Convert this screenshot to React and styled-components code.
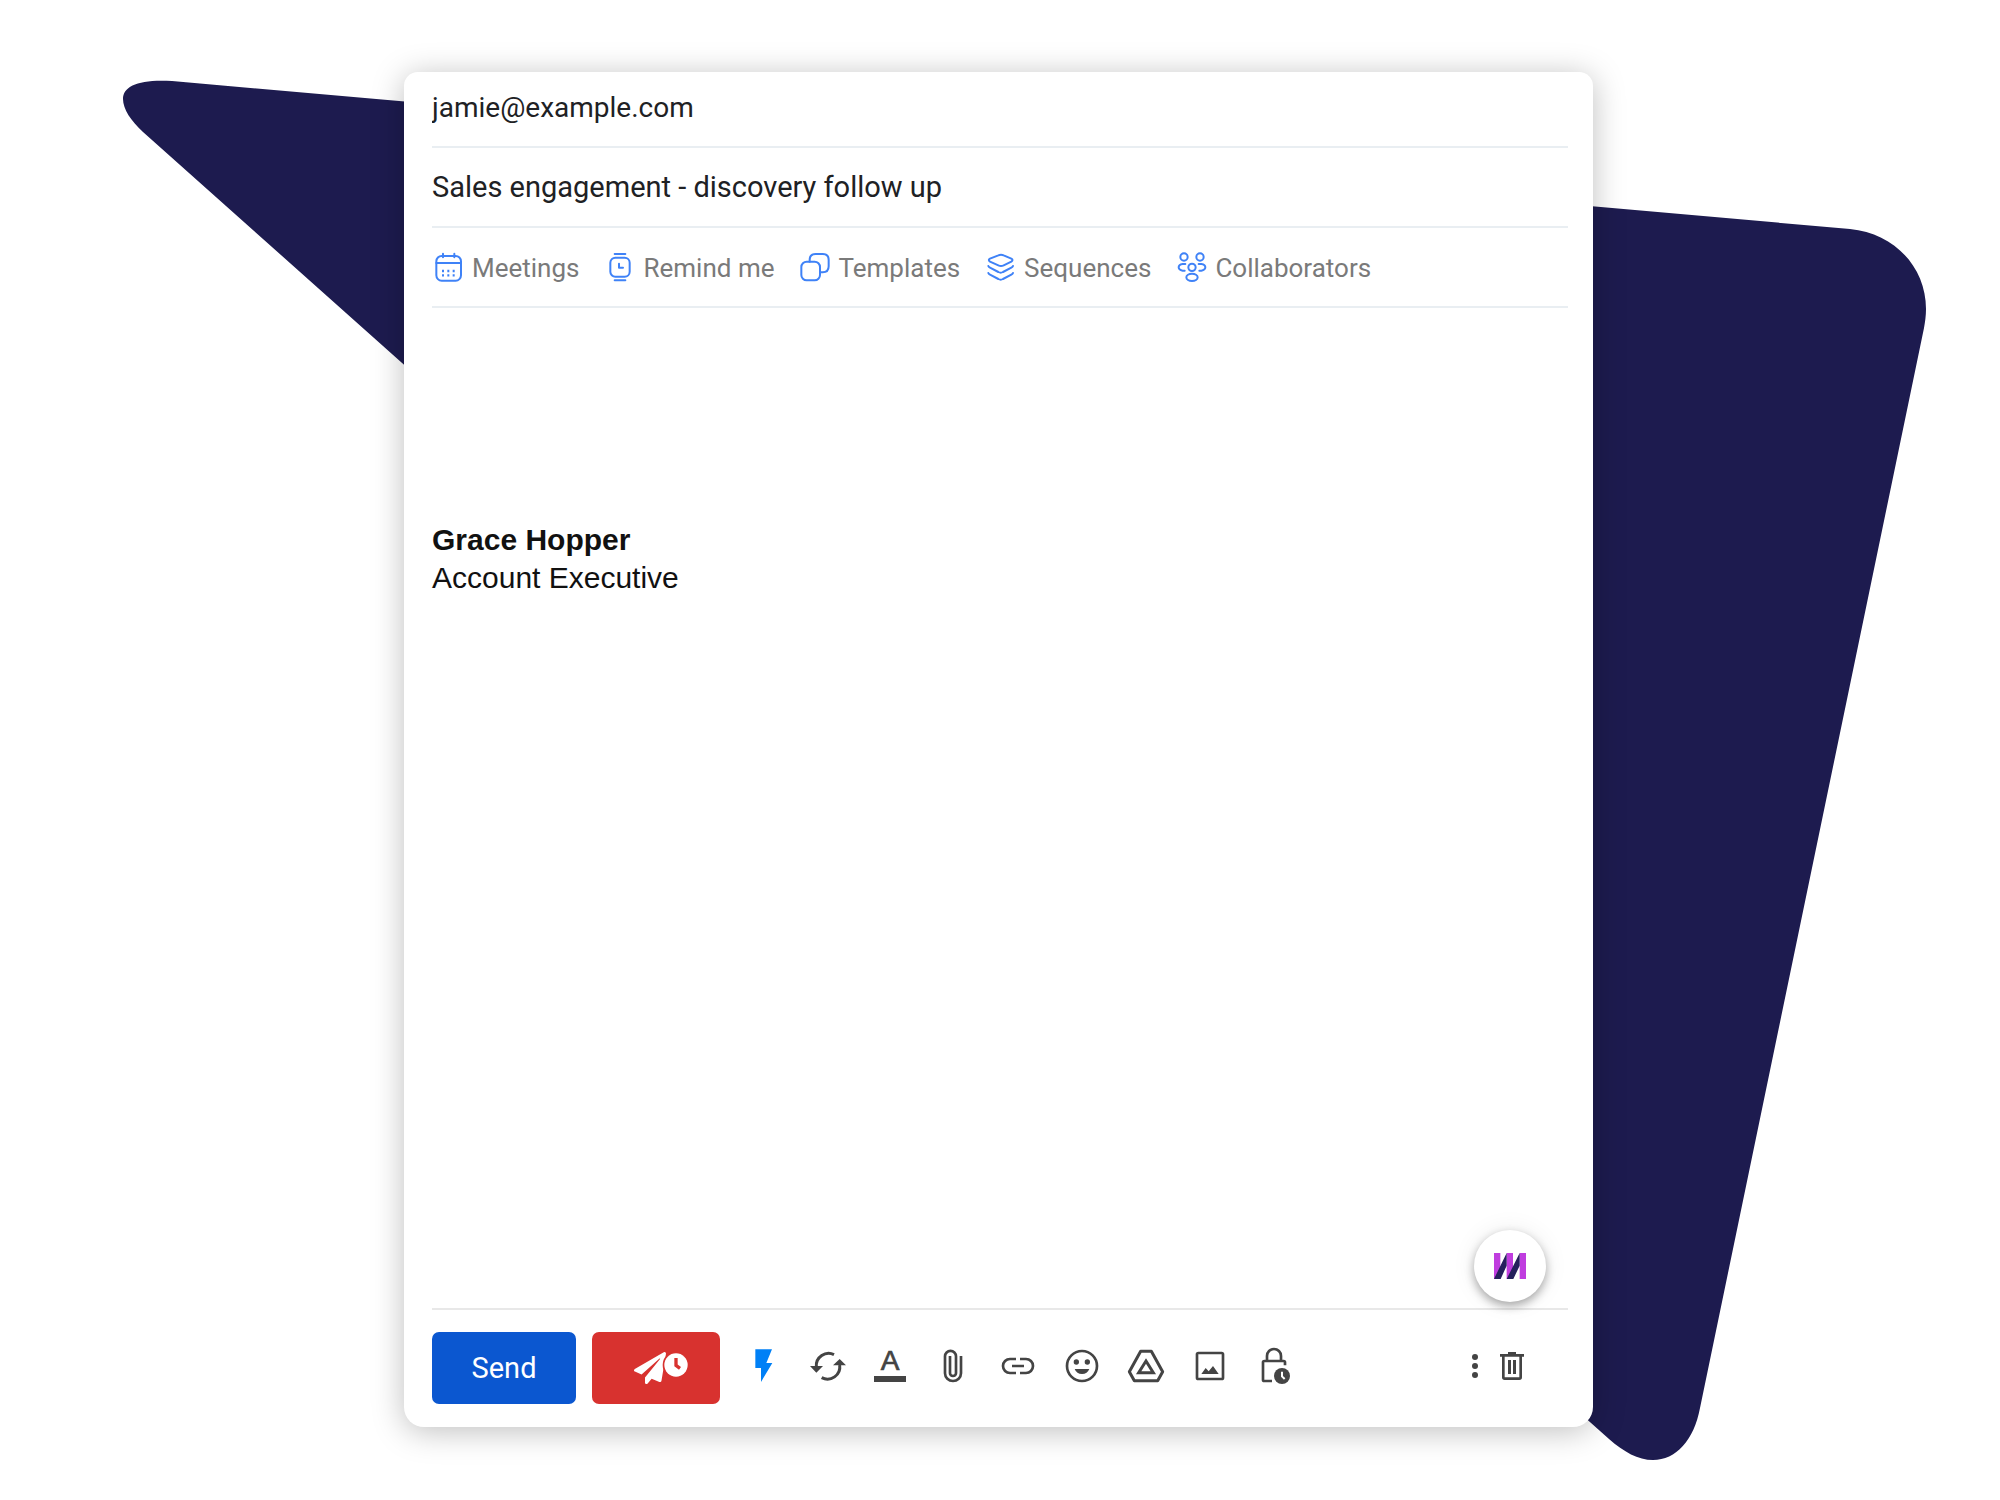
import React, { useState } from "react";
import styled, { createGlobalStyle } from "styled-components";

const GlobalStyle = createGlobalStyle`
  * {
    box-sizing: border-box;
  }

  body {
    margin: 0;
    background: #fff;
    font-family: Roboto, "Liberation Sans", sans-serif;
  }
`;

const shortcuts = [
  {
    label: "Meetings",
    icon: (
      <>
        <rect x="4" y="9" width="74" height="74" rx="16" />
        <path d="M4 30h74M24 2v11M58 2v11" />
        <path
          d="M21 54h6M37 54h6M53 54h6M21 67h6M37 67h6M53 67h6"
          strokeWidth="7"
          strokeLinecap="butt"
        />
      </>
    ),
  },
  {
    label: "Remind me",
    icon: (
      <>
        <rect x="13" y="14" width="58" height="57" rx="15" />
        <path d="M26 3h32M26 82h32M39 32v12h12" />
      </>
    ),
  },
  {
    label: "Templates",
    icon: (
      <>
        <rect x="1" y="26" width="56" height="56" rx="16" />
        <path d="M26 26v-5q0-18 18-18h21q18 0 18 18v19q0 18-18 18h-8" />
      </>
    ),
  },
  {
    label: "Sequences",
    icon: (
      <>
        <path d="M42 5Q38 5 34 7L9 17Q2 21 9 26L34 37Q42 41 50 37L73 26Q80 21 73 17L50 7Q46 5 42 5z" />
        <path d="M4 39q1 3 5 5l25 13q7 4 14 0l25-13q4-2 5-5M4 60q1 3 5 5l25 13q7 4 14 0l25-13q4-2 5-5" />
      </>
    ),
  },
  {
    label: "Collaborators",
    icon: (
      <>
        <circle cx="18" cy="12" r="11" />
        <circle cx="66" cy="12" r="11" />
        <circle cx="42" cy="43" r="11" />
        <ellipse cx="42" cy="73" rx="17" ry="11" />
        <path d="M22 33h-8q-12 2-12 10t12 10h6M62 33h8q12 2 12 10t-12 10h-6" />
      </>
    ),
  },
];

const tools = [
  {
    label: "Quick actions",
    icon: (
      <path d="M40 10H90L73 51H91L57 108V66H40z" fill="#0080f6" stroke="none" />
    ),
  },
  {
    label: "Refresh",
    icon: (
      <>
        <path
          d="M84 26A37 37 0 0 0 31 62M47 95A37 37 0 0 0 101 57"
          fill="none"
          strokeWidth="9"
        />
        <path d="M12 60H51L31 80zM120 58H81L101 39z" stroke="none" />
      </>
    ),
  },
  {
    label: "Text color",
    icon: (
      <>
        <text x="60" y="72" fontSize="84" textAnchor="middle" strokeWidth="2">
          A
        </text>
        <rect x="12" y="90" width="96" height="18" stroke="none" />
      </>
    ),
  },
  {
    label: "Attach file",
    icon: (
      <path
        d="M81 30V82a24 23 0 0 1-48 0V31a16 16 0 0 1 33 0V82a9 8 0 0 1-18 0V30"
        fill="none"
      />
    ),
  },
  {
    label: "Insert link",
    icon: (
      <path
        d="M54 39H36a21 21 0 0 0 0 42H54M66 39H84a21 21 0 0 1 0 42H66M42 60H78"
        fill="none"
      />
    ),
  },
  {
    label: "Insert emoji",
    icon: (
      <>
        <circle cx="60" cy="60" r="45" fill="none" />
        <circle cx="43" cy="48" r="8" stroke="none" />
        <circle cx="76" cy="48" r="8" stroke="none" />
        <path d="M38 69H82Q76 84 60 84Q44 84 38 69z" stroke="none" />
      </>
    ),
  },
  {
    label: "Insert from Drive",
    icon: (
      <>
        <path
          d="M44 16H76L110 77L95 104H25L10 77z"
          fill="none"
          strokeWidth="9"
          strokeLinejoin="round"
        />
        <path d="M60 45L82 80H38z" fill="none" strokeWidth="9" />
      </>
    ),
  },
  {
    label: "Insert photo",
    icon: (
      <>
        <rect x="21" y="21" width="78" height="78" rx="4" fill="none" />
        <path d="M34 84L47 66L56 76L69 60L86 84z" stroke="none" />
      </>
    ),
  },
  {
    label: "Confidential mode",
    icon: (
      <>
        <path
          d="M54 105H31Q27 105 27 101V49Q27 45 31 45H89Q93 45 93 49V58M39 45V30a21 21 0 0 1 42 0V45"
          fill="none"
        />
        <circle cx="84" cy="90" r="24" stroke="none" />
        <path d="M84 77V91L92 99" fill="none" stroke="#fff" strokeWidth="6" />
      </>
    ),
  },
];

function App() {
  const [to, setTo] = useState("jamie@example.com");
  const [subject, setSubject] = useState(
    "Sales engagement - discovery follow up"
  );

  return (
    <>
      <GlobalStyle />
      <S.Page>
        <S.Backdrop
          viewBox="0 0 2000 1500"
          preserveAspectRatio="none"
          aria-hidden="true"
        >
          <path d="M172 81L1850 229C1894 233 1926 267 1926 309C1926 316 1925 322 1924 328L1700 1408C1694 1440 1676 1460 1653 1460C1638 1460 1624 1452 1609 1439L143 132C131 121 123 109 123 99C123 86 139 79 172 81Z" />
        </S.Backdrop>

        <S.Card>
          <S.Recipient
            type="email"
            aria-label="To"
            value={to}
            onChange={(e) => setTo(e.target.value)}
          />
          <S.Subject
            type="text"
            aria-label="Subject"
            value={subject}
            onChange={(e) => setSubject(e.target.value)}
          />

          <S.Shortcuts>
            {shortcuts.map(({ label, icon }) => (
              <S.Shortcut key={label} type="button">
                <S.ShortcutIcon viewBox="-3 -3 90 90" aria-hidden="true">
                  {icon}
                </S.ShortcutIcon>
                <S.ShortcutLabel>{label}</S.ShortcutLabel>
              </S.Shortcut>
            ))}
          </S.Shortcuts>

          <S.Body>
            <S.SenderName>Grace Hopper</S.SenderName>
            <S.SenderTitle>Account Executive</S.SenderTitle>
            <S.Fab type="button" aria-label="Assistant">
              <svg width="32" height="26" viewBox="0 0 96 78">
                <path
                  d="M0 0H19V78H0zM38 0H57V78H38zM77 0H96V78H77z"
                  fill="#c03ddf"
                />
                <path
                  d="M38 0V38L20 78H0zM77 0V38L58 78H38z"
                  fill="#25205c"
                />
              </svg>
            </S.Fab>
          </S.Body>

          <S.Footer>
            <S.Send type="button">Send</S.Send>
            <S.SendLater type="button" aria-label="Send later">
              <svg width="56" height="36" viewBox="0 0 168 108">
                <path
                  transform="translate(3 6) scale(0.1875)"
                  d="M476 3.2L12.5 270.6c-18.1 10.4-15.8 35.6 2.2 43.2L121 358.4l287.3-253.2c5.5-4.9 13.3 2.6 8.6 8.3L176 407v80.5c0 23.6 28.5 32.9 42.5 15.8L282 426l124.6 52.2c14.2 6 30.4-2.9 33-18.2l72-432C515 7.8 493.3-6.8 476 3.2z"
                  fill="#fff"
                />
                <circle cx="129" cy="45" r="40" fill="#d8322f" />
                <circle cx="129" cy="45" r="35" fill="#fff" />
                <path
                  d="M129 24V46L141 55"
                  fill="none"
                  stroke="#d8322f"
                  strokeWidth="10"
                />
              </svg>
            </S.SendLater>

            <S.Tools>
              {tools.map(({ label, icon }) => (
                <S.Tool key={label} type="button" aria-label={label}>
                  <S.ToolIcon viewBox="0 0 120 120">{icon}</S.ToolIcon>
                </S.Tool>
              ))}
            </S.Tools>

            <S.More type="button" aria-label="More options">
              <svg width="6" height="24" viewBox="0 0 6 24" fill="#444">
                <circle cx="3" cy="3" r="3" />
                <circle cx="3" cy="12" r="3" />
                <circle cx="3" cy="21" r="3" />
              </svg>
            </S.More>
            <S.Trash type="button" aria-label="Discard draft">
              <S.ToolIcon viewBox="0 0 120 120">
                <path
                  d="M34 30V94Q34 98 38 98H82Q86 98 86 94V30"
                  fill="none"
                />
                <path
                  d="M24 24H96V32H24zM48 18H72V26H48zM48 42H57V84H48zM63 42H72V84H63z"
                  stroke="none"
                />
              </S.ToolIcon>
            </S.Trash>
          </S.Footer>
        </S.Card>
      </S.Page>
    </>
  );
}

const Field = styled.input`
  width: 100%;
  padding: 0;
  border: none;
  border-bottom: 2px solid #e9eef2;
  outline: none;
  background: none;
  color: #202124;
  font-family: inherit;
`;

const IconButton = styled.button`
  display: flex;
  align-items: center;
  justify-content: center;
  height: 68px;
  padding: 0;
  border: none;
  background: none;
  cursor: pointer;
`;

const S = {
  Page: styled.main`
    position: relative;
    display: grid;
    grid-template-columns: 404fr 1189fr 407fr;
    min-height: 100vh;
    padding: 72px 0 73px;
    overflow: hidden;
  `,

  Backdrop: styled.svg`
    position: absolute;
    inset: 0;
    width: 100%;
    height: 100%;
    fill: #1d1b4f;
  `,

  Card: styled.section`
    position: relative;
    grid-column: 2;
    display: flex;
    flex-direction: column;
    padding: 0 25px 0 28px;
    border-radius: 14px 14px 20px 20px;
    background: #fff;
    box-shadow: 0 4px 32px rgba(0, 0, 0, 0.26);
  `,

  Recipient: styled(Field)`
    height: 76px;
    padding-bottom: 3px;
    font-size: 28px;
  `,

  Subject: styled(Field)`
    height: 80px;
    font-size: 29px;
  `,

  Shortcuts: styled.nav`
    display: flex;
    align-items: center;
    gap: 26px;
    height: 80px;
    padding-left: 2px;
    border-bottom: 2px solid #e9eef2;
  `,

  Shortcut: styled.button`
    display: flex;
    align-items: center;
    gap: 8px;
    padding: 0;
    border: none;
    background: none;
    color: #7a7a7a;
    font-family: inherit;
    font-size: 26px;
    cursor: pointer;
  `,

  ShortcutLabel: styled.span`
    padding-top: 2px;
  `,

  ShortcutIcon: styled.svg`
    width: 30px;
    height: 30px;
    fill: none;
    stroke: #3f82f7;
    stroke-width: 6;
    stroke-linecap: round;
    stroke-linejoin: round;
  `,

  Body: styled.div`
    position: relative;
    flex: 1;
    padding-top: 213px;
    border-bottom: 2px solid #e8e8e8;
    color: #111;
    font-family: "Liberation Sans", Arial, sans-serif;
    font-size: 30px;
    line-height: 38px;
  `,

  SenderName: styled.div`
    font-weight: bold;
  `,

  SenderTitle: styled.div``,

  Fab: styled.button`
    position: absolute;
    right: 22px;
    bottom: 6px;
    display: flex;
    align-items: center;
    justify-content: center;
    width: 72px;
    height: 72px;
    padding: 0;
    border: none;
    border-radius: 50%;
    background: #fff;
    box-shadow: 0 4px 10px rgba(0, 0, 0, 0.32), 0 0 24px rgba(0, 0, 0, 0.08);
    cursor: pointer;
  `,

  Footer: styled.footer`
    display: flex;
    align-items: flex-start;
    padding: 22px 36px 23px 0;
  `,

  Send: styled.button`
    width: 144px;
    height: 72px;
    margin-right: 16px;
    padding: 0;
    border: none;
    border-radius: 7px;
    background: #0b57d0;
    color: #fff;
    font-family: inherit;
    font-size: 29px;
    cursor: pointer;
  `,

  SendLater: styled.button`
    display: flex;
    align-items: center;
    justify-content: center;
    width: 128px;
    height: 72px;
    margin-right: 10px;
    padding: 0 0 0 10px;
    border: none;
    border-radius: 7px;
    background: #d8322f;
    cursor: pointer;
  `,

  Tools: styled.div`
    display: flex;
    flex: 1;
  `,

  Tool: styled(IconButton)`
    width: 64px;
  `,

  More: styled(IconButton)`
    width: 34px;
  `,

  Trash: styled(IconButton)`
    width: 40px;
  `,

  ToolIcon: styled.svg`
    width: 40px;
    height: 40px;
    fill: #444;
    stroke: #444;
    stroke-width: 8;
  `,
};

export default App;
